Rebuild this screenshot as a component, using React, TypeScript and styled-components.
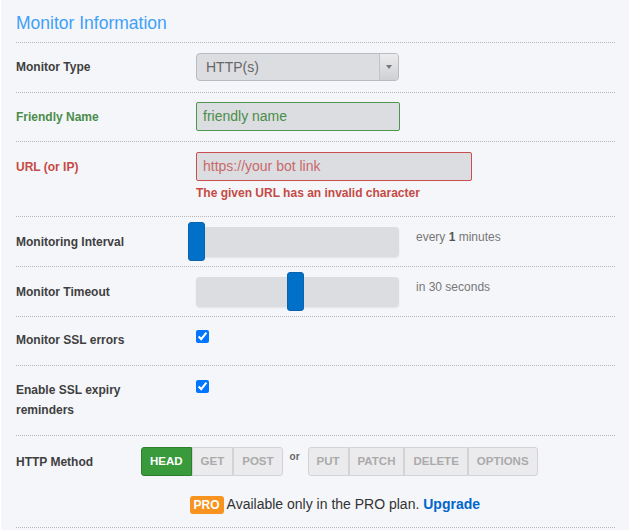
import React from 'react';
import styled, { createGlobalStyle, css } from 'styled-components';

const GlobalStyle = createGlobalStyle`
  body {
    margin: 0;
    background: #f5f6fa;
    font-family: 'Liberation Sans', Arial, Helvetica, sans-serif;
  }
`;

const Page = styled.div`
  width: 629px;
  box-sizing: border-box;
  padding: 0 14px 0 15px;
  border-left: 1px solid #ffffff;
  min-height: 530px;
`;

const Title = styled.h2`
  margin: 0;
  padding: 13px 0 9px;
  font-size: 17.5px;
  line-height: 20px;
  font-weight: 400;
  color: #3fa0f7;
  border-bottom: 1px dotted #b9b9bd;
`;

const Row = styled.div<{ $pt?: number; $pb?: number }>`
  display: flex;
  align-items: flex-start;
  padding-top: ${(p) => p.$pt ?? 10}px;
  padding-bottom: ${(p) => p.$pb ?? 10}px;
  border-bottom: 1px dotted #b9b9bd;
`;

const Label = styled.div<{ $h?: number; $w?: number; $tone?: 'ok' | 'error' }>`
  flex: 0 0 ${(p) => p.$w ?? 180}px;
  min-height: ${(p) => p.$h ?? 20}px;
  display: flex;
  align-items: center;
  font-size: 12px;
  font-weight: 700;
  line-height: 20px;
  color: ${(p) =>
    p.$tone === 'ok' ? '#4a8d4a' : p.$tone === 'error' ? '#c54a45' : '#3f3f3f'};
`;

const Control = styled.div`
  display: flex;
  flex-direction: column;
`;

const SelectBox = styled.div`
  width: 203px;
  height: 28px;
  box-sizing: border-box;
  display: flex;
  border: 1px solid #b9bac2;
  border-radius: 4px;
  background: #dcdde1;
  overflow: hidden;
`;

const SelectValue = styled.span`
  flex: 1;
  padding-left: 9px;
  font-size: 14px;
  line-height: 26px;
  color: #666;
`;

const SelectArrow = styled.span`
  flex: 0 0 18px;
  display: flex;
  align-items: center;
  justify-content: center;
  border-left: 1px solid #c2c3c8;
  background: linear-gradient(#ececee, #cfd0d4);

  &::after {
    content: '';
    border-left: 3px solid transparent;
    border-right: 3px solid transparent;
    border-top: 4px solid #777;
  }
`;

const TextInput = styled.div<{ $w: number; $tone: 'ok' | 'error' }>`
  width: ${(p) => p.$w}px;
  height: 29px;
  box-sizing: border-box;
  padding-left: 6px;
  border-radius: 2px;
  background: #dcdde1;
  font-size: 14px;
  line-height: 27px;
  ${(p) =>
    p.$tone === 'ok'
      ? css`
          border: 1px solid #4f9650;
          color: #4a8d4a;
        `
      : css`
          border: 1px solid #c94f4f;
          color: #c66a6a;
        `}
`;

const ErrorText = styled.div`
  margin-top: 4px;
  font-size: 12px;
  font-weight: 700;
  line-height: 16px;
  color: #c54a45;
`;

const SliderWrap = styled.div`
  position: relative;
  width: 203px;
  height: 39px;
  display: flex;
  align-items: center;
`;

const Track = styled.div`
  width: 100%;
  height: 30px;
  box-sizing: border-box;
  border-radius: 4px;
  background: #dcdde1;
  box-shadow: 0 1px 2px rgba(0, 0, 0, 0.08);
`;

const Thumb = styled.div`
  position: absolute;
  top: 0;
  width: 17px;
  height: 39px;
  box-sizing: border-box;
  border-radius: 3px;
  background: #0070c9;
  border: 1px solid #0a63ad;
`;

const SideNote = styled.div`
  margin: 7px 0 0 17px;
  font-size: 12px;
  line-height: 16px;
  color: #777;

  b {
    color: #555;
  }
`;

const Check = styled.input`
  margin: 0;
  width: 13px;
  height: 13px;
  accent-color: #0075ff;
`;

const MethodLine = styled.div`
  display: flex;
  align-items: flex-start;
`;

const Group = styled.div`
  display: flex;
`;

const MethodButton = styled.button<{ $active?: boolean }>`
  height: 29px;
  box-sizing: border-box;
  padding: 0 8px;
  margin: 0;
  font-family: inherit;
  font-size: 11.5px;
  font-weight: 700;
  line-height: 27px;
  border-radius: 0;
  ${(p) =>
    p.$active
      ? css`
          background: #389a3a;
          border: 1px solid #2d7f2f;
          color: #fff;
        `
      : css`
          background: #ebebed;
          border: 1px solid #d3d3d6;
          color: #aaa;
        `}

  &:first-child {
    border-radius: 3px 0 0 3px;
  }
  &:last-child {
    border-radius: 0 3px 3px 0;
  }
`;

const Or = styled.span`
  margin: 4px 8px 0 7px;
  font-size: 10px;
  font-weight: 700;
  color: #666;
`;

const ProLine = styled.div`
  margin-top: 18px;
  padding-right: 9px;
  text-align: center;
  font-size: 14px;
  line-height: 20px;
  color: #333;
`;

const ProBadge = styled.span`
  display: inline-block;
  margin-right: 3px;
  padding: 0 4px;
  border-radius: 3px;
  background: #f7931e;
  color: #fff;
  font-size: 12px;
  font-weight: 700;
  line-height: 18px;
`;

const Upgrade = styled.a`
  color: #0066cc;
  font-weight: 700;
  text-decoration: none;
`;

const Slider: React.FC<{ value: number; min: number; max: number }> = ({
  value,
  min,
  max,
}) => {
  const pos = ((value - min) / (max - min)) * 203 - 8.5;
  return (
    <SliderWrap>
      <Track />
      <Thumb style={{ left: pos }} />
    </SliderWrap>
  );
};

const App: React.FC = () => {
  return (
    <Page>
      <GlobalStyle />
      <Title>Monitor Information</Title>

      <Row $pb={11}>
        <Label $h={28}>Monitor Type</Label>
        <SelectBox>
          <SelectValue>HTTP(s)</SelectValue>
          <SelectArrow />
        </SelectBox>
      </Row>

      <Row $pt={9}>
        <Label $h={29} $tone="ok">
          Friendly Name
        </Label>
        <TextInput $w={204} $tone="ok">
          friendly name
        </TextInput>
      </Row>

      <Row $pb={15}>
        <Label $h={30} $tone="error">
          URL (or IP)
        </Label>
        <Control>
          <TextInput $w={276} $tone="error">
            https://your bot link
          </TextInput>
          <ErrorText>The given URL has an invalid character</ErrorText>
        </Control>
      </Row>

      <Row $pt={5} $pb={5}>
        <Label $h={39}>Monitoring Interval</Label>
        <Slider value={1} min={1} max={60} />
        <SideNote>
          every <b>1</b> minutes
        </SideNote>
      </Row>

      <Row $pt={5} $pb={5}>
        <Label $h={39}>Monitor Timeout</Label>
        <Slider value={30} min={1} max={60} />
        <SideNote>in 30 seconds</SideNote>
      </Row>

      <Row $pt={13} $pb={15}>
        <Label>Monitor SSL errors</Label>
        <Check type="checkbox" checked readOnly />
      </Row>

      <Row $pt={14} $pb={15}>
        <Label>
          Enable SSL expiry
          <br />
          reminders
        </Label>
        <Check type="checkbox" checked readOnly />
      </Row>

      <Row $pt={11} $pb={13}>
        <Label $h={29} $w={125}>
          HTTP Method
        </Label>
        <Control>
          <MethodLine>
            <Group>
              <MethodButton $active>HEAD</MethodButton>
              <MethodButton>GET</MethodButton>
              <MethodButton>POST</MethodButton>
            </Group>
            <Or>or</Or>
            <Group>
              <MethodButton>PUT</MethodButton>
              <MethodButton>PATCH</MethodButton>
              <MethodButton>DELETE</MethodButton>
              <MethodButton>OPTIONS</MethodButton>
            </Group>
          </MethodLine>
          <ProLine>
            <ProBadge>PRO</ProBadge>Available only in the PRO plan.{' '}
            <Upgrade href="#">Upgrade</Upgrade>
          </ProLine>
        </Control>
      </Row>
    </Page>
  );
};

export default App;
